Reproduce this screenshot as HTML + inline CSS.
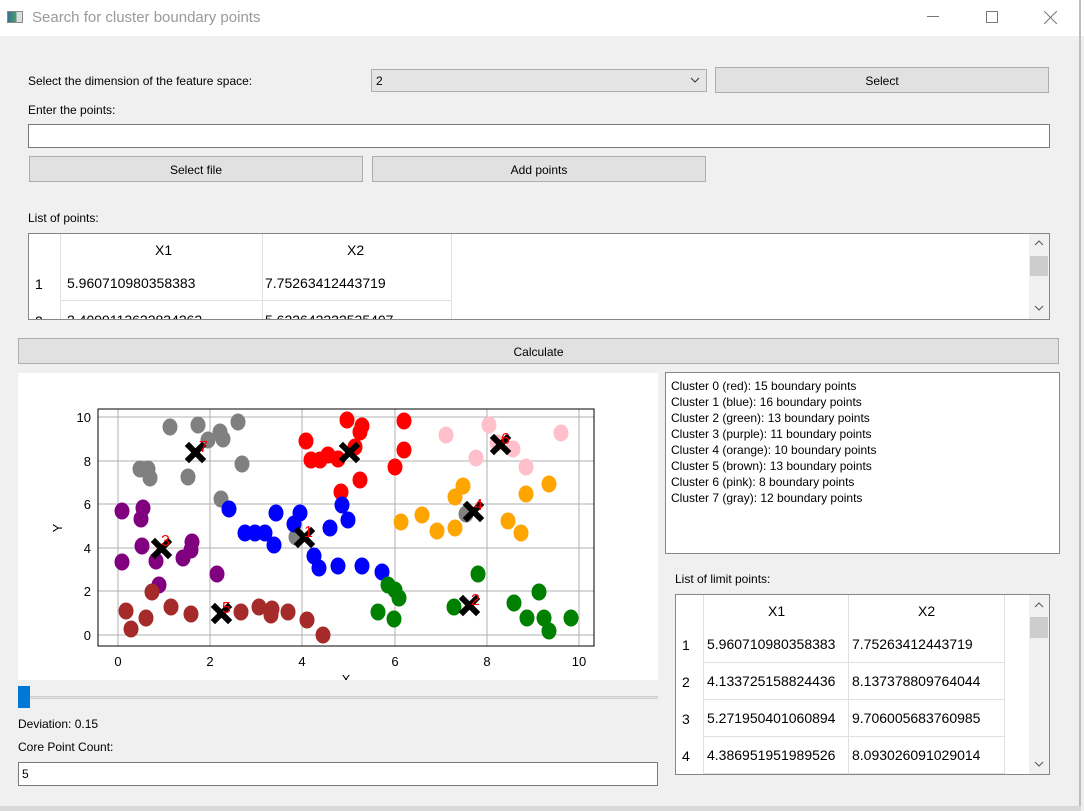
<!DOCTYPE html>
<html><head><meta charset="utf-8"><style>
*{margin:0;padding:0;box-sizing:border-box}
body{width:1084px;height:811px;background:#f0f0f0;position:relative;overflow:hidden;font-family:"Liberation Sans",sans-serif;font-size:12px;color:#000}
.a{position:absolute}
.btn{position:absolute;background:#e1e1e1;border:1px solid #adadad;text-align:center;font-size:12px}
.in{position:absolute;background:#fff;border:1px solid #7a7a7a}
.t{position:absolute;white-space:nowrap}
.tb{position:absolute;background:#fff;border:1px solid #828790;overflow:hidden}
.sb{position:absolute;background:#f0f0f0}
.lb{font-size:16px;fill:red;font-family:"Liberation Sans",sans-serif}
</style></head><body>
<div class="a" style="left:0;top:0;width:1084px;height:36px;background:#fff"></div>
<div class="a" style="left:7px;top:11px;width:16px;height:12px;border:1px solid #888;background:linear-gradient(90deg,#3a6f8f,#4aa070 60%,#ddd 60%)"></div>
<div class="t" style="left:32px;top:9px;font-size:15px;color:#999">Search for cluster boundary points</div>
<div class="a" style="left:927px;top:16px;width:12px;height:1px;background:#777"></div>
<div class="a" style="left:986px;top:11px;width:12px;height:12px;border:1px solid #777"></div>
<svg class="a" style="left:1044px;top:11px" width="13" height="13"><path d="M0 0L13 13M13 0L0 13" stroke="#777" stroke-width="1"/></svg>
<div class="a" style="left:1079px;top:0;width:2px;height:811px;background:#bdbdbd"></div>
<div class="a" style="left:0;top:806px;width:1081px;height:5px;background:#d8d8d8"></div>

<div class="t" style="left:28px;top:74px">Select the dimension of the feature space:</div>
<div class="a" style="left:371px;top:69px;width:336px;height:23px;background:#e5e5e5;border:1px solid #adadad"><span class="t" style="left:4px;top:4px">2</span>
<svg class="a" style="left:318px;top:7px" width="10" height="6"><path d="M1 1L5 5L9 1" stroke="#333" fill="none"/></svg></div>
<div class="btn" style="left:715px;top:67px;width:334px;height:26px;line-height:26px">Select</div>
<div class="t" style="left:28px;top:103px">Enter the points:</div>
<div class="in" style="left:28px;top:124px;width:1022px;height:24px"></div>
<div class="btn" style="left:29px;top:156px;width:334px;height:26px;line-height:26px">Select file</div>
<div class="btn" style="left:372px;top:156px;width:334px;height:26px;line-height:26px">Add points</div>
<div class="t" style="left:28px;top:211px">List of points:</div>

<div class="tb" style="left:28px;top:233px;width:1022px;height:87px">
 <div class="a" style="left:31px;top:0;width:1px;height:87px;background:#e0e0e0"></div>
 <div class="a" style="left:233px;top:0;width:1px;height:87px;background:#e0e0e0"></div>
 <div class="a" style="left:422px;top:0;width:1px;height:87px;background:#e0e0e0"></div>
 <div class="a" style="left:32px;top:66px;width:390px;height:1px;background:#e0e0e0"></div>
 <div class="t" style="left:126px;top:8px;font-size:14px">X1</div>
 <div class="t" style="left:318px;top:8px;font-size:14px">X2</div>
 <div class="t" style="left:6px;top:42px;font-size:14px">1</div>
 <div class="t" style="left:38px;top:41px;font-size:14px">5.960710980358383</div>
 <div class="t" style="left:236px;top:41px;font-size:14px">7.75263412443719</div>
 <div class="t" style="left:6px;top:79px;font-size:14px">2</div>
 <div class="t" style="left:38px;top:78px;font-size:14px">2.4099113622834262</div>
 <div class="t" style="left:236px;top:78px;font-size:14px">5.622642222535407</div>
 <div class="sb" style="left:1000px;top:0;width:20px;height:85px"></div>
 <div class="a" style="left:1001px;top:22px;width:18px;height:20px;background:#cdcdcd"></div>
 <svg class="a" style="left:1005px;top:6px" width="10" height="72"><path d="M1 5L5 1L9 5M1 66L5 70L9 66" stroke="#555" fill="none"/></svg>
</div>

<div class="btn" style="left:18px;top:338px;width:1041px;height:26px;line-height:26px">Calculate</div>

<svg class="a" style="left:18px;top:373px" width="640" height="307" font-family="Liberation Sans,sans-serif">
<rect width="640" height="307" fill="#fff"/>
<g transform="translate(-18,-373)">
<g stroke="#b0b0b0" stroke-width="1">
<line x1="118" y1="409" x2="118" y2="646"/><line x1="210" y1="409" x2="210" y2="646"/><line x1="302" y1="409" x2="302" y2="646"/><line x1="395" y1="409" x2="395" y2="646"/><line x1="487" y1="409" x2="487" y2="646"/><line x1="579" y1="409" x2="579" y2="646"/>
<line x1="98" y1="635" x2="594" y2="635"/><line x1="98" y1="591" x2="594" y2="591"/><line x1="98" y1="548" x2="594" y2="548"/><line x1="98" y1="504" x2="594" y2="504"/><line x1="98" y1="461" x2="594" y2="461"/><line x1="98" y1="417" x2="594" y2="417"/>
</g>
<g font-size="13" fill="#000" text-anchor="middle">
<text x="118" y="666">0</text><text x="210" y="666">2</text><text x="302" y="666">4</text><text x="395" y="666">6</text><text x="487" y="666">8</text><text x="579" y="666">10</text>
<text x="346" y="684">X</text>
</g>
<g font-size="13" text-anchor="end">
<text x="91" y="640">0</text><text x="91" y="596">2</text><text x="91" y="553">4</text><text x="91" y="509">6</text><text x="91" y="466">8</text><text x="91" y="422">10</text>
</g>
<text x="62" y="528" font-size="13" transform="rotate(-90 62 528)" text-anchor="middle">Y</text>
<g>
<g fill="gray"><ellipse cx="170" cy="427" rx="7.5" ry="8.5"/><ellipse cx="198" cy="425" rx="7.5" ry="8.5"/><ellipse cx="238" cy="422" rx="7.5" ry="8.5"/><ellipse cx="220" cy="432" rx="7.5" ry="8.5"/><ellipse cx="223" cy="439" rx="7.5" ry="8.5"/><ellipse cx="208" cy="440" rx="7.5" ry="8.5"/><ellipse cx="140" cy="469" rx="7.5" ry="8.5"/><ellipse cx="148" cy="469" rx="7.5" ry="8.5"/><ellipse cx="150" cy="478" rx="7.5" ry="8.5"/><ellipse cx="188" cy="477" rx="7.5" ry="8.5"/><ellipse cx="242" cy="464" rx="7.5" ry="8.5"/><ellipse cx="221" cy="499" rx="7.5" ry="8.5"/><ellipse cx="466" cy="514" rx="7.5" ry="8.5"/><ellipse cx="296" cy="537" rx="7.5" ry="8.5"/></g>
<g fill="red"><ellipse cx="306" cy="441" rx="7.5" ry="8.5"/><ellipse cx="347" cy="420" rx="7.5" ry="8.5"/><ellipse cx="362" cy="426" rx="7.5" ry="8.5"/><ellipse cx="404" cy="421" rx="7.5" ry="8.5"/><ellipse cx="404" cy="450" rx="7.5" ry="8.5"/><ellipse cx="311" cy="460" rx="7.5" ry="8.5"/><ellipse cx="320" cy="460" rx="7.5" ry="8.5"/><ellipse cx="328" cy="455" rx="7.5" ry="8.5"/><ellipse cx="338" cy="459" rx="7.5" ry="8.5"/><ellipse cx="355" cy="447" rx="7.5" ry="8.5"/><ellipse cx="360" cy="480" rx="7.5" ry="8.5"/><ellipse cx="341" cy="492" rx="7.5" ry="8.5"/><ellipse cx="395" cy="467" rx="7.5" ry="8.5"/><ellipse cx="360" cy="432" rx="7.5" ry="8.5"/></g>
<g fill="pink"><ellipse cx="446" cy="435" rx="7.5" ry="8.5"/><ellipse cx="489" cy="425" rx="7.5" ry="8.5"/><ellipse cx="561" cy="433" rx="7.5" ry="8.5"/><ellipse cx="476" cy="458" rx="7.5" ry="8.5"/><ellipse cx="513" cy="449" rx="7.5" ry="8.5"/><ellipse cx="526" cy="467" rx="7.5" ry="8.5"/><ellipse cx="497" cy="443" rx="7.5" ry="8.5"/></g>
<g fill="orange"><ellipse cx="463" cy="486" rx="7.5" ry="8.5"/><ellipse cx="455" cy="497" rx="7.5" ry="8.5"/><ellipse cx="401" cy="522" rx="7.5" ry="8.5"/><ellipse cx="422" cy="515" rx="7.5" ry="8.5"/><ellipse cx="437" cy="531" rx="7.5" ry="8.5"/><ellipse cx="455" cy="528" rx="7.5" ry="8.5"/><ellipse cx="526" cy="494" rx="7.5" ry="8.5"/><ellipse cx="549" cy="484" rx="7.5" ry="8.5"/><ellipse cx="508" cy="521" rx="7.5" ry="8.5"/><ellipse cx="521" cy="533" rx="7.5" ry="8.5"/></g>
<g fill="blue"><ellipse cx="229" cy="509" rx="7.5" ry="8.5"/><ellipse cx="276" cy="513" rx="7.5" ry="8.5"/><ellipse cx="300" cy="513" rx="7.5" ry="8.5"/><ellipse cx="294" cy="524" rx="7.5" ry="8.5"/><ellipse cx="245" cy="533" rx="7.5" ry="8.5"/><ellipse cx="255" cy="533" rx="7.5" ry="8.5"/><ellipse cx="265" cy="533" rx="7.5" ry="8.5"/><ellipse cx="274" cy="545" rx="7.5" ry="8.5"/><ellipse cx="314" cy="556" rx="7.5" ry="8.5"/><ellipse cx="319" cy="568" rx="7.5" ry="8.5"/><ellipse cx="342" cy="505" rx="7.5" ry="8.5"/><ellipse cx="348" cy="520" rx="7.5" ry="8.5"/><ellipse cx="330" cy="528" rx="7.5" ry="8.5"/><ellipse cx="338" cy="566" rx="7.5" ry="8.5"/><ellipse cx="362" cy="566" rx="7.5" ry="8.5"/><ellipse cx="382" cy="572" rx="7.5" ry="8.5"/></g>
<g fill="purple"><ellipse cx="122" cy="511" rx="7.5" ry="8.5"/><ellipse cx="143" cy="508" rx="7.5" ry="8.5"/><ellipse cx="141" cy="519" rx="7.5" ry="8.5"/><ellipse cx="142" cy="546" rx="7.5" ry="8.5"/><ellipse cx="122" cy="562" rx="7.5" ry="8.5"/><ellipse cx="156" cy="561" rx="7.5" ry="8.5"/><ellipse cx="192" cy="542" rx="7.5" ry="8.5"/><ellipse cx="191" cy="550" rx="7.5" ry="8.5"/><ellipse cx="183" cy="558" rx="7.5" ry="8.5"/><ellipse cx="217" cy="574" rx="7.5" ry="8.5"/><ellipse cx="159" cy="585" rx="7.5" ry="8.5"/></g>
<g fill="brown"><ellipse cx="152" cy="592" rx="7.5" ry="8.5"/><ellipse cx="126" cy="611" rx="7.5" ry="8.5"/><ellipse cx="131" cy="629" rx="7.5" ry="8.5"/><ellipse cx="146" cy="618" rx="7.5" ry="8.5"/><ellipse cx="171" cy="607" rx="7.5" ry="8.5"/><ellipse cx="191" cy="614" rx="7.5" ry="8.5"/><ellipse cx="241" cy="612" rx="7.5" ry="8.5"/><ellipse cx="259" cy="607" rx="7.5" ry="8.5"/><ellipse cx="272" cy="609" rx="7.5" ry="8.5"/><ellipse cx="271" cy="615" rx="7.5" ry="8.5"/><ellipse cx="288" cy="612" rx="7.5" ry="8.5"/><ellipse cx="307" cy="620" rx="7.5" ry="8.5"/><ellipse cx="323" cy="635" rx="7.5" ry="8.5"/></g>
<g fill="green"><ellipse cx="388" cy="585" rx="7.5" ry="8.5"/><ellipse cx="395" cy="590" rx="7.5" ry="8.5"/><ellipse cx="399" cy="598" rx="7.5" ry="8.5"/><ellipse cx="378" cy="612" rx="7.5" ry="8.5"/><ellipse cx="394" cy="619" rx="7.5" ry="8.5"/><ellipse cx="454" cy="607" rx="7.5" ry="8.5"/><ellipse cx="478" cy="574" rx="7.5" ry="8.5"/><ellipse cx="514" cy="603" rx="7.5" ry="8.5"/><ellipse cx="539" cy="592" rx="7.5" ry="8.5"/><ellipse cx="527" cy="618" rx="7.5" ry="8.5"/><ellipse cx="544" cy="618" rx="7.5" ry="8.5"/><ellipse cx="549" cy="631" rx="7.5" ry="8.5"/><ellipse cx="571" cy="618" rx="7.5" ry="8.5"/></g>
</g>
<g stroke="#000" stroke-width="6" stroke-linecap="square">
<path d="M189 446l13 13M202 446l-13 13"/><path d="M343 446l13 13M356 446l-13 13"/><path d="M494 438l13 13M507 438l-13 13"/><path d="M467 505l13 13M480 505l-13 13"/><path d="M298 531l13 13M311 531l-13 13"/><path d="M155 542l13 13M168 542l-13 13"/><path d="M463 599l13 13M476 599l-13 13"/><path d="M215 607l13 13M228 607l-13 13"/>
</g>
<text class="lb" x="199" y="452">7</text><text class="lb" x="501" y="444">6</text><text class="lb" x="474" y="510">4</text><text class="lb" x="304" y="537">1</text><text class="lb" x="161" y="546">3</text><text class="lb" x="471" y="605">2</text><text class="lb" x="222" y="613">5</text>
<rect x="98" y="409" width="496" height="237" fill="none" stroke="#000" stroke-width="1"/>
</g>
</svg>

<div class="a" style="left:18px;top:696px;width:640px;height:3px;background:#e0e0e0;border:1px solid #d0d0d0"></div>
<div class="a" style="left:18px;top:686px;width:12px;height:22px;background:#0078d7"></div>
<div class="t" style="left:18px;top:717px">Deviation: 0.15</div>
<div class="t" style="left:18px;top:740px">Core Point Count:</div>
<div class="in" style="left:18px;top:762px;width:640px;height:24px"><span class="t" style="left:3px;top:4px">5</span></div>

<div class="in" style="left:665px;top:372px;width:395px;height:182px;border-color:#828790">
<div class="t" style="left:5px;top:5px;line-height:16px">Cluster 0 (red): 15 boundary points<br>Cluster 1 (blue): 16 boundary points<br>Cluster 2 (green): 13 boundary points<br>Cluster 3 (purple): 11 boundary points<br>Cluster 4 (orange): 10 boundary points<br>Cluster 5 (brown): 13 boundary points<br>Cluster 6 (pink): 8 boundary points<br>Cluster 7 (gray): 12 boundary points</div>
</div>

<div class="t" style="left:675px;top:572px">List of limit points:</div>
<div class="tb" style="left:675px;top:594px;width:375px;height:181px">
 <div class="a" style="left:27px;top:0;width:1px;height:181px;background:#e0e0e0"></div>
 <div class="a" style="left:172px;top:0;width:1px;height:181px;background:#e0e0e0"></div>
 <div class="a" style="left:328px;top:0;width:1px;height:181px;background:#e0e0e0"></div>
 <div class="a" style="left:28px;top:67px;width:300px;height:1px;background:#e0e0e0"></div>
 <div class="a" style="left:28px;top:104px;width:300px;height:1px;background:#e0e0e0"></div>
 <div class="a" style="left:28px;top:141px;width:300px;height:1px;background:#e0e0e0"></div>
 <div class="a" style="left:28px;top:178px;width:300px;height:1px;background:#e0e0e0"></div>
 <div class="t" style="left:92px;top:8px;font-size:14px">X1</div>
 <div class="t" style="left:242px;top:8px;font-size:14px">X2</div>
 <div class="t" style="left:6px;top:42px;font-size:14px">1</div><div class="t" style="left:31px;top:41px;font-size:14px">5.960710980358383</div><div class="t" style="left:176px;top:41px;font-size:14px">7.75263412443719</div>
 <div class="t" style="left:6px;top:79px;font-size:14px">2</div><div class="t" style="left:31px;top:78px;font-size:14px">4.133725158824436</div><div class="t" style="left:176px;top:78px;font-size:14px">8.137378809764044</div>
 <div class="t" style="left:6px;top:116px;font-size:14px">3</div><div class="t" style="left:31px;top:115px;font-size:14px">5.271950401060894</div><div class="t" style="left:176px;top:115px;font-size:14px">9.706005683760985</div>
 <div class="t" style="left:6px;top:153px;font-size:14px">4</div><div class="t" style="left:31px;top:152px;font-size:14px">4.386951951989526</div><div class="t" style="left:176px;top:152px;font-size:14px">8.093026091029014</div>
 <div class="sb" style="left:353px;top:0;width:20px;height:179px"></div>
 <div class="a" style="left:354px;top:22px;width:18px;height:21px;background:#cdcdcd"></div>
 <svg class="a" style="left:358px;top:7px" width="10" height="166"><path d="M1 5L5 1L9 5M1 160L5 164L9 160" stroke="#555" fill="none"/></svg>
</div>
</body></html>
